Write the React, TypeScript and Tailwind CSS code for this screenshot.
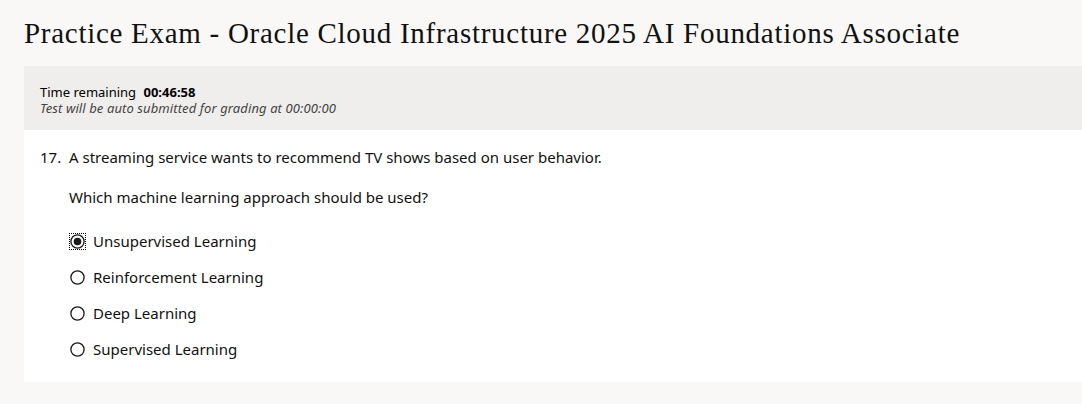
import React from "react";

const options = [
  "Unsupervised Learning",
  "Reinforcement Learning",
  "Deep Learning",
  "Supervised Learning",
];

function Radio({ checked }: { checked: boolean }) {
  return (
    <span
      className={
        "flex h-[17px] w-[17px] items-center justify-center " +
        (checked ? "outline outline-1 outline-dotted outline-black -outline-offset-1" : "")
      }
    >
      <svg width="15" height="15" viewBox="0 0 15 15">
        <circle cx="7.5" cy="7.5" r="6.6" fill="white" stroke="#1a1a1a" strokeWidth="1.3" />
        {checked && <circle cx="7.5" cy="7.5" r="3.8" fill="#1a1a1a" />}
      </svg>
    </span>
  );
}

export default function App() {
  return (
    <div
      className="min-h-[404px] w-[1082px] bg-[#f9f8f7] pl-[24px] text-black"
      style={{ fontFamily: '"Noto Sans", "Open Sans", sans-serif' }}
    >
      <h1
        className="pt-[14px] pb-[13px] text-[29px] leading-[39px] tracking-[0.72px] text-[#111]"
        style={{ fontFamily: '"Liberation Serif", serif' }}
      >
        Practice Exam - Oracle Cloud Infrastructure 2025 AI Foundations Associate
      </h1>
      <div className="flex h-[64px] flex-col justify-center bg-[#efeeec] pl-[16px] text-[13px] leading-[16px]">
        <div className="mt-[3px]">
          Time remaining <span className="ml-[4px] font-bold">00:46:58</span>
        </div>
        <div className="italic tracking-[0.1px] text-[#444]">Test will be auto submitted for grading at 00:00:00</div>
      </div>
      <div className="h-[252px] bg-white pl-[16px] pt-[17px] text-[15px] leading-[20px] text-[#111]">
        <div className="flex">
          <span className="w-[29px]">17.</span>
          <div>
            <p>A streaming service wants to recommend TV shows based on user behavior.</p>
            <p className="mt-[20px]">Which machine learning approach should be used?</p>
            <div className="mt-[24px] flex flex-col gap-[16px]">
              {options.map((o, i) => (
                <label key={o} className="flex items-center gap-[7px]">
                  <Radio checked={i === 0} />
                  <span>{o}</span>
                </label>
              ))}
            </div>
          </div>
        </div>
      </div>
    </div>
  );
}
